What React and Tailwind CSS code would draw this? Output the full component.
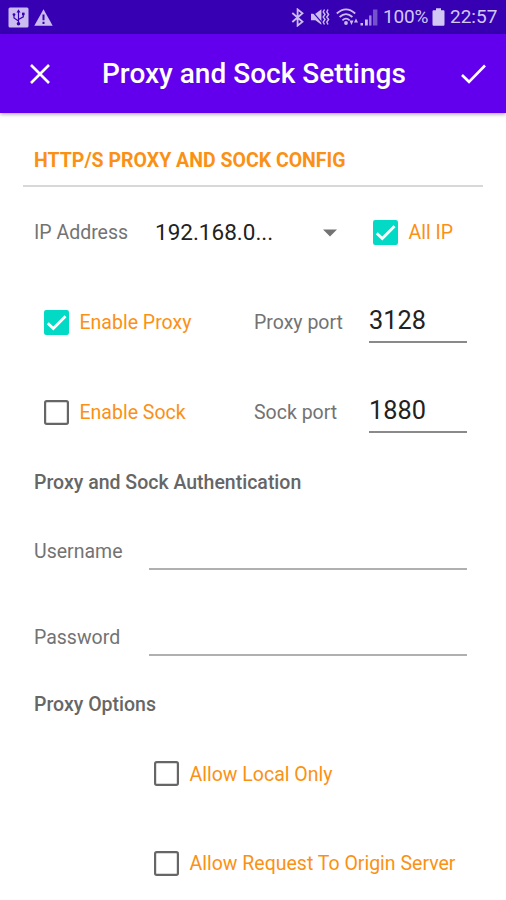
import { useState } from 'react';

const STATUS_TINT = '#cbbcf0';

function Checkbox({ checked, onChange, label, className = '' }) {
  return (
    <button
      type="button"
      role="checkbox"
      aria-checked={checked}
      onClick={() => onChange(!checked)}
      className={`flex items-center text-[19.5px] text-[#fb9114] whitespace-nowrap ${className}`}
    >
      <svg viewBox="0 0 25 25" className="w-[25px] h-[25px] shrink-0 -translate-y-px">
        {checked ? (
          <>
            <rect width="25" height="25" rx="2.2" fill="#03dac5" />
            <path d="M3.8 13.2 L9.3 18.5 L21.5 6.3" fill="none" stroke="#fff" strokeWidth="2.8" />
          </>
        ) : (
          <rect x="1.1" y="1.1" width="22.8" height="22.8" rx="1.6" fill="none" stroke="#666" strokeWidth="2.2" />
        )}
      </svg>
      <span className="ml-[10.5px]">{label}</span>
    </button>
  );
}

function PortField({ label, value, onChange }) {
  return (
    <label className="flex items-center h-full">
      <span className="w-[115px] text-[19.5px] text-[#737373]">{label}</span>
      <input
        value={value}
        onChange={(e) => onChange(e.target.value)}
        className="w-[98px] h-[40px] pb-[4px] border-b-2 border-[#8a8a8a] text-[25.3px] text-[#222] outline-none"
      />
    </label>
  );
}

function TextField({ label, type, className }) {
  return (
    <label className={`flex items-center pl-[34px] ${className}`}>
      <span className="w-[115px] text-[19.5px] text-[#737373]">{label}</span>
      <input type={type} className="w-[318px] h-[36px] border-b-2 border-[#b0b0b0] outline-none" />
    </label>
  );
}

function StatusBar() {
  return (
    <div className="flex items-center h-[34px] pl-2 pr-[10px] bg-[#3700b3] text-[#d3c7f3]">
      <svg viewBox="0 0 21 21" className="w-[21px] h-[21px]">
        <rect x="0.5" y="0.5" width="20" height="20" rx="1.5" fill={STATUS_TINT} />
        <g fill="none" stroke="#3700b3" strokeWidth="1.2">
          <path d="M10.5 4.5 V17 M10.5 14 L6 11 V7.5 M10.5 12.5 L15.3 9.8 V6.5" />
        </g>
        <path d="M10.5 2.3 L12.5 5.4 H8.5 Z" fill="#3700b3" />
        <circle cx="10.5" cy="16.8" r="1.8" fill="#3700b3" />
        <circle cx="6" cy="7.6" r="1.4" fill="#3700b3" />
        <rect x="14" y="5.6" width="2.6" height="2.6" fill="#3700b3" />
      </svg>
      <svg viewBox="0 0 19 17" className="w-[19px] h-[17px] ml-[5px]">
        <path d="M9.5 0.3 L18.7 16.7 H0.3 Z" fill={STATUS_TINT} />
        <path d="M9.5 5.5 V11.2 M9.5 12.8 V15" stroke="#3700b3" strokeWidth="2" />
      </svg>

      <svg viewBox="0 0 13 19" className="w-[13px] h-[19px] ml-auto">
        <path d="M1.3 5 L11.5 13.7 L6.6 17.6 V1.4 L11.5 5.3 L1.3 14" fill="none" stroke={STATUS_TINT} strokeWidth="1.8" />
      </svg>
      <svg viewBox="0 0 20 18" className="w-[20px] h-[18px] ml-[6px]">
        <path d="M1 5.8 H5.4 L11.4 1.2 V16.8 L5.4 12.2 H1 Z" fill={STATUS_TINT} />
        <path d="M0.8 1.8 L13.5 16.3" stroke="#3700b3" strokeWidth="1.2" />
        <path d="M14.5 1.5 L13.2 4 L15 6.5 L13.2 9 L15 11.5 L13.2 14 L14.5 16.5 M18 1.5 L16.8 4 L18.6 6.5 L16.8 9 L18.6 11.5 L16.8 14 L18 16.5" fill="none" stroke={STATUS_TINT} strokeWidth="1.4" />
      </svg>
      <svg viewBox="0 0 23 18" className="w-[23px] h-[18px] ml-[6px]">
        <g fill="none" stroke={STATUS_TINT} strokeWidth="1.8">
          <path d="M0.8 5.5 Q10 -2.8 19.2 5.5" />
          <path d="M3.6 9 Q10 3.2 16.4 9" />
          <path d="M6.4 12.3 Q10 9 13.6 12.3" />
        </g>
        <circle cx="10" cy="15" r="1.9" fill={STATUS_TINT} />
        <path d="M13.5 12.5 H17.5 L15.5 17 Z M18 14.5 L20 10.5 L22 14.5 Z" fill={STATUS_TINT} />
      </svg>
      <svg viewBox="0 0 18 17" className="w-[18px] h-[17px] ml-px">
        <path d="M0.5 14 H3 V16.5 H0.5 Z M5 10.5 H7.8 V16.5 H5 Z" fill={STATUS_TINT} />
        <path d="M9.3 6.5 H11.8 V16.5 H9.3 Z M13 0.5 H17.4 V16.5 H13 Z" fill="#7352cb" />
        <path d="M9.3 6.5 H10.8 V16.5 H9.3 Z" fill="#a68fe0" />
      </svg>
      <span className="ml-[5px] w-[44px] text-[19px] tracking-[-0.2px] whitespace-nowrap origin-left">100%</span>
      <svg viewBox="0 0 13 18" className="w-[13px] h-[18px] ml-[5px]">
        <path d="M4 0.3 H9 V2.3 H11.5 Q12.5 2.3 12.5 3.5 V16.5 Q12.5 17.7 11.5 17.7 H1.5 Q0.5 17.7 0.5 16.5 V3.5 Q0.5 2.3 1.5 2.3 H4 Z" fill="#d3c7f3" />
      </svg>
      <span className="ml-[5px] w-[46px] text-[19px] whitespace-nowrap">22:57</span>
    </div>
  );
}

export default function App() {
  const [allIp, setAllIp] = useState(true);
  const [proxyEnabled, setProxyEnabled] = useState(true);
  const [sockEnabled, setSockEnabled] = useState(false);
  const [proxyPort, setProxyPort] = useState('3128');
  const [sockPort, setSockPort] = useState('1880');
  const [localOnly, setLocalOnly] = useState(false);
  const [originServer, setOriginServer] = useState(false);

  return (
    <div className="w-[506px] h-[900px] overflow-hidden bg-white font-['Roboto',sans-serif]">
      <StatusBar />

      {/* App bar */}
      <header className="relative flex items-center h-[79px] pl-[30px] pr-[20px] bg-[#6200ee] text-white shadow-[0_1px_4px_rgba(0,0,0,0.4)]">
        <button type="button" aria-label="Close">
          <svg viewBox="0 0 20 20" className="w-[20px] h-[20px]">
            <path d="M1 1 L19 19 M19 1 L1 19" stroke="currentColor" strokeWidth="2.6" />
          </svg>
        </button>
        <h1 className="ml-[52px] text-[28px] font-medium whitespace-nowrap">Proxy and Sock Settings</h1>
        <button type="button" aria-label="Save" className="ml-auto">
          <svg viewBox="0 0 25 20" className="w-[25px] h-[20px]">
            <path d="M1 11 L8 17.8 L24 1.5" fill="none" stroke="currentColor" strokeWidth="2.6" />
          </svg>
        </button>
      </header>

      <main className="pt-[24px]">
        <h2 className="flex items-center h-[48px] pl-[34px] text-[19.5px] font-bold text-[#fb9114]">
          HTTP/S PROXY AND SOCK CONFIG
        </h2>
        <div className="h-[2px] mx-[23px] mb-px bg-[#d8d8d8]" />

        <div className="flex items-center h-[90px] pl-[34px]">
          <span className="w-[121px] text-[19.5px] text-[#737373]">IP Address</span>
          <button type="button" className="flex items-center w-[218px]">
            <span className="w-[168px] text-left text-[22.5px] text-[#222]">192.168.0...</span>
            <svg viewBox="0 0 14 8" className="w-[14px] h-[8px]">
              <path d="M0 0.5 H14 L7 7.5 Z" fill="#737373" />
            </svg>
          </button>
          <Checkbox checked={allIp} onChange={setAllIp} label="All IP" />
        </div>

        <div className="flex items-center h-[90px] pl-[44px]">
          <Checkbox checked={proxyEnabled} onChange={setProxyEnabled} label="Enable Proxy" className="w-[210px]" />
          <PortField label="Proxy port" value={proxyPort} onChange={setProxyPort} />
        </div>
        <div className="flex items-center h-[90px] pl-[44px]">
          <Checkbox checked={sockEnabled} onChange={setSockEnabled} label="Enable Sock" className="w-[210px]" />
          <PortField label="Sock port" value={sockPort} onChange={setSockPort} />
        </div>

        <h3 className="flex items-center h-[50px] pl-[34px] text-[19.5px] font-medium text-[#666]">
          Proxy and Sock Authentication
        </h3>
        <TextField label="Username" type="text" className="h-[88px]" />
        <TextField label="Password" type="password" className="h-[84px]" />

        <h3 className="flex items-center h-[50px] pl-[34px] text-[19.5px] font-medium text-[#666]">
          Proxy Options
        </h3>
        <Checkbox checked={localOnly} onChange={setLocalOnly} label="Allow Local Only" className="h-[89px] ml-[154px]" />
        <Checkbox checked={originServer} onChange={setOriginServer} label="Allow Request To Origin Server" className="h-[90px] ml-[154px]" />
      </main>
    </div>
  );
}
